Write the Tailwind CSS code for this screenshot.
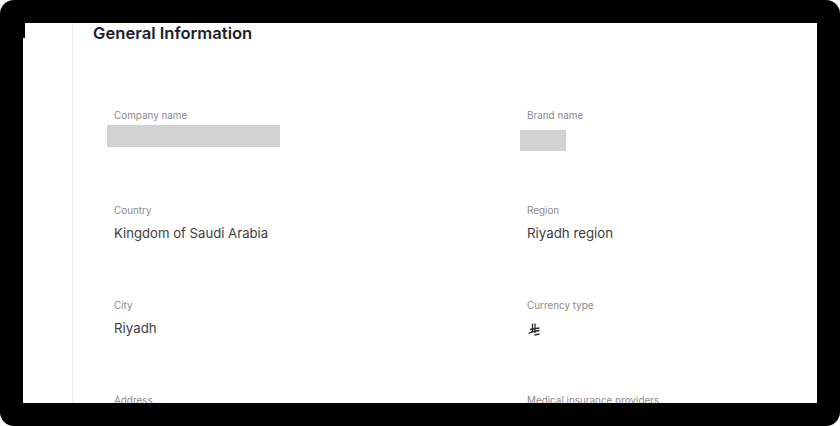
<!DOCTYPE html>
<html lang="en">
  <head>
    <meta charset="UTF-8" />
    <title>General Information</title>
    <script src="https://cdn.jsdelivr.net/npm/@tailwindcss/browser@4"></script>
  </head>
  <body class="bg-white">
    <!-- Black frame -->
    <div class="w-[840px] h-[426px] bg-black rounded-[14px] pt-[23px] pb-[23px] pl-[23px] pr-[23px] overflow-hidden font-['Inter',sans-serif]">
      <div class="relative flex h-[380px] bg-white overflow-hidden">
        <!-- Notch top left -->
        <div class="absolute left-0 top-0 w-[2px] h-[15px] bg-black"></div>
        <!-- Sidebar -->
        <div class="w-[50px] shrink-0 border-r border-[#ececec]"></div>

        <!-- Main -->
        <div class="flex-1 pl-[20px]">
          <h1 class="text-[16.6px] leading-[21px] font-semibold text-[#1b2130]">General Information</h1>

          <div class="grid grid-cols-[413px_1fr] auto-rows-[95px] pl-[21px] mt-[64px]">
            <!-- Company name -->
            <div class="relative">
              <p class="text-[9.9px] leading-[14px] text-[#8a8a8a]">Company name</p>
              <div class="absolute left-[-7px] top-[17px] w-[173px] h-[22px] bg-[#d1d3d3]"></div>
            </div>
            <div class="relative">
              <p class="text-[9.9px] leading-[14px] text-[#8a8a8a]">Brand name</p>
              <div class="absolute left-[-7px] top-[22px] w-[46px] h-[21px] bg-[#d1d3d3]"></div>
            </div>

            <!-- Country -->
            <div>
              <p class="text-[9.9px] leading-[14px] text-[#8a8a8a]">Country</p>
              <p class="mt-[6px] text-[13.15px] leading-[20px] text-[#3d3d3d]">Kingdom of Saudi Arabia</p>
            </div>
            <div>
              <p class="text-[9.9px] leading-[14px] text-[#8a8a8a]">Region</p>
              <p class="mt-[6px] text-[13.3px] leading-[20px] text-[#3d3d3d]">Riyadh region</p>
            </div>

            <!-- City -->
            <div>
              <p class="text-[9.9px] leading-[14px] text-[#8a8a8a]">City</p>
              <p class="mt-[6px] text-[13.3px] leading-[20px] text-[#3d3d3d]">Riyadh</p>
            </div>
            <div>
              <p class="text-[9.9px] leading-[14px] text-[#8a8a8a]">Currency type</p>
              <svg class="mt-[11px] ml-[1px] w-[12px] h-[13px]" viewBox="0 0 12 13" fill="none" stroke="#2b2b2b" stroke-width="1.3">
                <path d="M4.5 0.5V8.5L0.5 10.5" />
                <path d="M7 0.5V10" />
                <path d="M2 6.5L11.5 5" />
                <path d="M3 9L11.5 7.5" />
                <path d="M6.5 12L11.5 11" />
              </svg>
            </div>

            <!-- Address -->
            <div>
              <p class="text-[9.9px] leading-[14px] text-[#8a8a8a]">Address</p>
            </div>
            <div>
              <p class="text-[9.9px] leading-[14px] text-[#8a8a8a]">Medical insurance providers</p>
            </div>
          </div>
        </div>
      </div>
    </div>
  </body>
</html>
